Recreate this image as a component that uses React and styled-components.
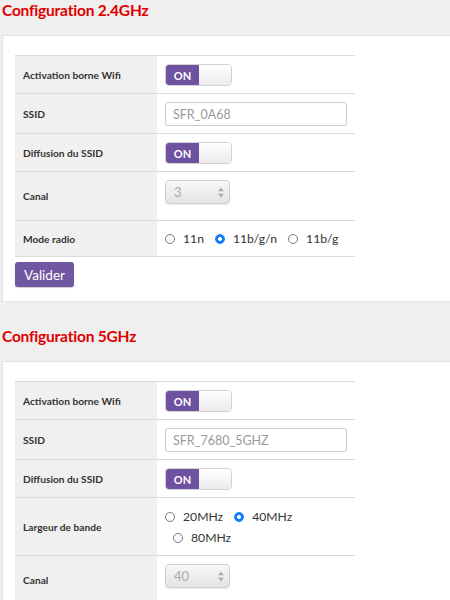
import React from 'react';
import styled, { createGlobalStyle } from 'styled-components';

const GlobalStyle = createGlobalStyle`
  body {
    margin: 0;
    background: #efefef;
    font-family: Lato, "Open Sans", "Liberation Sans", sans-serif;
    overflow: hidden;
  }
  * { box-sizing: border-box; }
`;

const Page = styled.div`
  width: 470px;
  padding-left: 2px;
`;

const Title = styled.h2`
  margin: ${p => (p.$first ? '0' : '24px')} 0 15px;
  height: 20px;
  line-height: 20px;
  font-size: 15.5px;
  font-weight: 700;
  letter-spacing: -0.2px;
  color: #e00000;
`;

const Card = styled.div`
  background: #fff;
  border: 1px solid #e3e3e3;
  padding: 19px 13px 14px 12px;
`;

const Table = styled.div`
  width: 340px;
  border-top: 1px solid #dadada;
`;

const Row = styled.div`
  display: flex;
  border-bottom: 1px solid #dadada;
`;

const Label = styled.div`
  width: 142px;
  flex-shrink: 0;
  background: #f0f0f0;
  display: flex;
  align-items: center;
  padding: 0 8px;
  font-size: 10.2px;
  font-weight: 700;
  color: #333;
`;

const Value = styled.div`
  flex: 1;
  padding: 8px 8px ${p => p.$bottom || '7px'};
  display: flex;
  align-items: flex-start;
`;

const Toggle = styled.div`
  display: flex;
  width: 67px;
  height: 22px;
  border: 1px solid #d2d2d2;
  border-radius: 4px;
  overflow: hidden;
`;

const ToggleOn = styled.span`
  width: 33px;
  background: #6e529f;
  color: #fff;
  font-size: 11px;
  font-weight: 700;
  display: flex;
  align-items: center;
  justify-content: center;
`;

const ToggleOff = styled.span`
  flex: 1;
  background: linear-gradient(#ffffff, #ebebeb);
`;

const TextInput = styled.input`
  width: 182px;
  height: 24px;
  border: 1px solid #cdcdcd;
  border-radius: 3px;
  padding: 0 7px;
  font-family: inherit;
  font-size: 12.5px;
  color: #9a9a9a;
  outline: none;
`;

const Select = styled.div`
  width: 65px;
  height: 24px;
  border: 1px solid #d0d0d0;
  border-radius: 4px;
  background: linear-gradient(#f8f8f8, #e3e3e3);
  box-shadow: 0 1px 1px rgba(0, 0, 0, 0.08);
  display: flex;
  align-items: center;
  justify-content: space-between;
  padding: 0 5px 0 8px;
  font-size: 13px;
  color: #ababab;
`;

const RadioGroup = styled.div`
  display: flex;
  flex-wrap: wrap;
  align-items: center;
  column-gap: 11px;
  line-height: ${p => p.$line || '20px'};
  font-size: 12.2px;
  color: #333;
`;

const Option = styled.label`
  display: flex;
  align-items: center;
  gap: 8px;
  margin-left: ${p => (p.$indent ? '8px' : '0')};
  white-space: nowrap;
`;

const Dot = styled.span`
  width: 10px;
  height: 10px;
  border-radius: 50%;
  border: 1px solid ${p => (p.$checked ? '#137ef9' : '#7a7a7a')};
  background: ${p =>
    p.$checked ? 'radial-gradient(circle, #fff 0 1.6px, #137ef9 2.2px)' : '#fff'};
`;

const Break = styled.span`
  flex-basis: 100%;
  height: 0;
`;

const Button = styled.button`
  margin-top: 5px;
  width: 59px;
  height: 25px;
  border: none;
  border-radius: 3px;
  background: #7157a1;
  box-shadow: 0 1px 1px rgba(0, 0, 0, 0.2);
  color: #fff;
  font-family: inherit;
  font-size: 13.5px;
  font-weight: 400;
  padding: 0;
`;

function Switch() {
  return (
    <Toggle>
      <ToggleOn>ON</ToggleOn>
      <ToggleOff />
    </Toggle>
  );
}

function Arrows() {
  return (
    <svg width="6" height="11" viewBox="0 0 6 11">
      <path d="M3 0.5 L5.6 4.3 H0.4 Z" fill="#a8a8a8" />
      <path d="M3 10.5 L5.6 6.7 H0.4 Z" fill="#a8a8a8" />
    </svg>
  );
}

function Radio({ checked, children, indent }) {
  return (
    <Option $indent={indent}>
      <Dot $checked={checked} />
      {children}
    </Option>
  );
}

export default function App() {
  return (
    <Page>
      <GlobalStyle />
      <Title $first>Configuration 2.4GHz</Title>
      <Card>
        <Table>
          <Row>
            <Label>Activation borne Wifi</Label>
            <Value><Switch /></Value>
          </Row>
          <Row>
            <Label>SSID</Label>
            <Value><TextInput defaultValue="SFR_0A68" readOnly /></Value>
          </Row>
          <Row>
            <Label>Diffusion du SSID</Label>
            <Value><Switch /></Value>
          </Row>
          <Row>
            <Label>Canal</Label>
            <Value $bottom="16px">
              <Select>3<Arrows /></Select>
            </Value>
          </Row>
          <Row>
            <Label>Mode radio</Label>
            <Value>
              <RadioGroup>
                <Radio>11n</Radio>
                <Radio checked>11b/g/n</Radio>
                <Radio>11b/g</Radio>
              </RadioGroup>
            </Value>
          </Row>
        </Table>
        <Button>Valider</Button>
      </Card>

      <Title>Configuration 5GHz</Title>
      <Card>
        <Table>
          <Row>
            <Label>Activation borne Wifi</Label>
            <Value><Switch /></Value>
          </Row>
          <Row>
            <Label>SSID</Label>
            <Value><TextInput defaultValue="SFR_7680_5GHZ" readOnly /></Value>
          </Row>
          <Row>
            <Label>Diffusion du SSID</Label>
            <Value><Switch /></Value>
          </Row>
          <Row>
            <Label>Largeur de bande</Label>
            <Value>
              <RadioGroup $line="21px">
                <Radio>20MHz</Radio>
                <Radio checked>40MHz</Radio>
                <Break />
                <Radio indent>80MHz</Radio>
              </RadioGroup>
            </Value>
          </Row>
          <Row>
            <Label>Canal</Label>
            <Value $bottom="16px">
              <Select>40<Arrows /></Select>
            </Value>
          </Row>
        </Table>
      </Card>
    </Page>
  );
}
